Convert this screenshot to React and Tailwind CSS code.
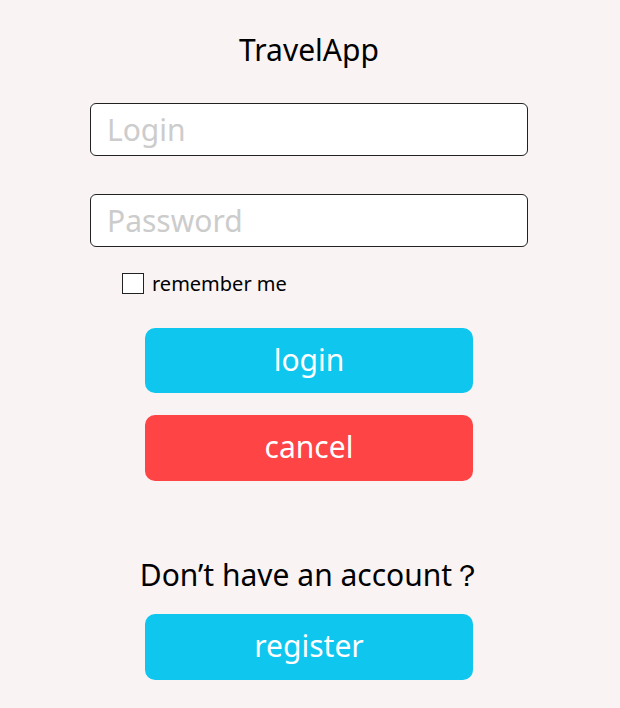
import React from 'react';

export default function App() {
  const font = { fontFamily: '"Noto Sans", "Open Sans", sans-serif' };
  return (
    <div className="w-[620px] h-[708px] bg-[#f9f3f3]" style={font}>
      <div className="w-[618px] flex flex-col items-center">
        <h1 className="mt-[30px] text-[30px] leading-[40px] text-black">TravelApp</h1>
        <div className="mt-[33px] w-[438px] flex flex-col gap-[38px]">
          <input
            placeholder="Login"
            className="h-[53px] w-full bg-white border border-[#222] rounded-[6px] px-[16px] text-[30px] placeholder:text-[#cccccc] outline-none"
          />
          <input
            type="password"
            placeholder="Password"
            className="h-[53px] w-full bg-white border border-[#222] rounded-[6px] px-[16px] text-[30px] placeholder:text-[#cccccc] outline-none"
          />
        </div>
        <label className="mt-[26px] h-[21px] w-[438px] pl-[32px] flex items-center gap-[8px] text-[20px] leading-[21px] text-black">
          <span className="w-[22px] h-[21px] border border-[#222] bg-white" />
          remember me
        </label>
        <button className="mt-[34px] w-[328px] h-[65px] pb-[3px] rounded-[10px] bg-[#0fc6ef] text-white text-[30px]">login</button>
        <button className="mt-[22px] w-[328px] h-[66px] pb-[3px] rounded-[10px] bg-[#ff4446] text-white text-[30px]">cancel</button>
        <p className="mt-[74px] pl-[4px] text-[30px] leading-[40px] text-black">Don’t have an account？</p>
        <button className="mt-[19px] w-[328px] h-[66px] pb-[3px] rounded-[10px] bg-[#0fc6ef] text-white text-[30px]">register</button>
      </div>
    </div>
  );
}
